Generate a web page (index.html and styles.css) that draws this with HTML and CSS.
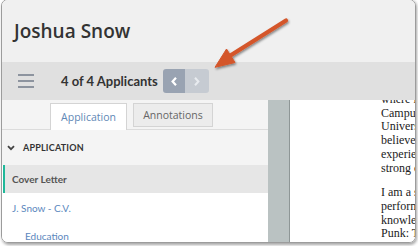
FILE: index.html
```html
<!DOCTYPE html>
<html>
<head>
<meta charset="utf-8">
<link rel="stylesheet" href="styles.css">
</head>
<body>
<div class="window">
  <header class="header"><h1 class="title">Joshua Snow</h1></header>
  <div class="toolbar">
    <span class="burger"><i></i><i></i><i></i></span>
    <span class="count">4 of 4 Applicants</span>
    <span class="pager">
      <span class="pg prev"><svg width="8" height="11" viewBox="0 0 8 11"><path d="M6 1.8 L2.6 5.5 L6 9.2" fill="none" stroke="#fff" stroke-width="2.2"/></svg></span>
      <span class="pg next"><svg width="8" height="11" viewBox="0 0 8 11"><path d="M2 1.8 L5.4 5.5 L2 9.2" fill="none" stroke="#e8ebef" stroke-width="2"/></svg></span>
    </span>
  </div>
  <div class="main">
    <aside class="sidebar">
      <div class="tabs">
        <span class="tab active">Application</span>
        <span class="tab">Annotations</span>
      </div>
      <div class="section">
        <svg class="chev" width="8" height="6" viewBox="0 0 8 6"><path d="M1 1.2 L4 4.2 L7 1.2" fill="none" stroke="#444" stroke-width="1.8"/></svg>
        <span>APPLICATION</span>
      </div>
      <div class="item current">Cover Letter</div>
      <div class="item link">J. Snow - C.V.</div>
      <div class="item sub">Education</div>
    </aside>
    <div class="gutter"></div>
    <div class="doc">
      <div class="page">
        <p>where I<br>Campus<br>University<br>believe<br>experience<br>strong communication</p>
        <p>I am a strong<br>performance<br>knowledge<br>Punk: The</p>
      </div>
    </div>
  </div>
</div>
<svg class="arrow" width="100" height="70" viewBox="200 10 100 70">
  <defs>
    <filter id="sh" x="-20%" y="-20%" width="140%" height="140%">
      <feDropShadow dx="1" dy="1.5" stdDeviation="1.2" flood-color="#000" flood-opacity="0.45"/>
    </filter>
  </defs>
  <g filter="url(#sh)" fill="#d4562b" stroke="#d4562b">
    <line x1="286" y1="20.5" x2="228" y2="57" stroke-width="4.2" stroke-linecap="round"/>
    <path d="M215 67.3 L226.5 49 L235 62.5 Z" stroke-width="1" stroke-linejoin="round"/>
  </g>
</svg>
</body>
</html>
```

FILE: styles.css
```css
* { box-sizing: border-box; }
html, body { margin: 0; padding: 0; background: #fff; }
body { width: 418px; height: 246px; position: relative; overflow: hidden; }

.window {
  margin: -1px 0 0 1px;
  width: 415px;
  height: 244px;
  border: 1px solid #9c9c9c;
  border-radius: 7px;
  box-shadow: 1px 1.5px 3px rgba(0,0,0,0.35);
  overflow: hidden;
  display: flex;
  flex-direction: column;
  font-family: "Open Sans", "Liberation Sans", sans-serif;
}

.header {
  height: 62px;
  background: #f0f0f0;
  display: flex;
  align-items: center;
  padding-left: 12px;
}
.title {
  margin: 0;
  font-size: 19px;
  font-weight: 600;
  color: #333;
}

.toolbar {
  height: 38px;
  background: #e0e0e0;
  display: flex;
  align-items: center;
  padding-left: 16px;
}
.burger {
  width: 16px;
  display: flex;
  flex-direction: column;
  gap: 3.5px;
}
.burger i {
  display: block;
  height: 2.5px;
  background: #8d949f;
}
.count {
  margin-left: 27px;
  font-family: "Lato", "Open Sans", sans-serif;
  font-size: 13px;
  font-weight: 700;
  color: #333;
}
.pager {
  margin-left: 5px;
  display: flex;
  height: 24px;
}
.pg {
  display: flex;
  align-items: center;
  justify-content: center;
}
.prev { background: #99a3b2; border-radius: 3px 0 0 3px; width: 22px; }
.next { background: #c6cbd2; border-radius: 0 3px 3px 0; width: 24px; }

.main {
  flex: 1;
  display: flex;
  min-height: 0;
}
.sidebar {
  width: 266px;
  flex-shrink: 0;
  background: #fff;
  display: flex;
  flex-direction: column;
  font-family: "Lato", "Open Sans", sans-serif;
  font-size: 10px;
}
.tabs {
  height: 30px;
  flex-shrink: 0;
  background: #f4f4f4;
  border-bottom: 1px solid #dcdcdc;
  display: flex;
  align-items: flex-end;
  padding-left: 48px;
  gap: 6px;
}
.tab {
  height: 24px;
  display: flex;
  align-items: center;
  justify-content: center;
  border: 1px solid #d4d4d4;
  color: #666;
  font-family: "Open Sans", sans-serif;
  font-size: 10.5px;
  background: #ececec;
  margin-bottom: 2px;
  width: 80px;
}
.tab.active {
  width: 77px;
  background: #fff;
  color: #5f88b6;
  border-bottom: none;
  height: 27px;
  margin-bottom: -1px;
}
.section {
  height: 35px;
  flex-shrink: 0;
  background: #f4f4f4;
  display: flex;
  align-items: center;
  padding-left: 5px;
  gap: 8px;
  font-weight: 700;
  color: #333;
  font-size: 9px;
  letter-spacing: 0.2px;
}
.item {
  display: flex;
  align-items: center;
  padding-left: 10px;
  flex-shrink: 0;
}
.item.current {
  height: 28px;
  background: #e6e6e6;
  border-left: 2px solid #1fb89a;
  padding-left: 7px;
  font-weight: 700;
  color: #555;
  margin-left: 1px;
}
.item.link {
  height: 29px;
  color: #5b87bd;
}
.item.sub {
  height: 28px;
  padding-left: 23px;
  color: #5b87bd;
}

.gutter {
  width: 22px;
  flex-shrink: 0;
  background: #bac2c2;
  border-right: 1px solid #8e9696;
}
.doc {
  flex: 1;
  min-width: 0;
  background: #fff;
  overflow: hidden;
  padding-left: 91px;
}
.page {
  margin-top: -7px;
  font-family: "Liberation Serif", serif;
  font-size: 12px;
  line-height: 13.7px;
  color: #222;
  white-space: nowrap;
}
.page p { margin: 0 0 11px; }

.arrow {
  position: absolute;
  left: 200px;
  top: 10px;
}
```
